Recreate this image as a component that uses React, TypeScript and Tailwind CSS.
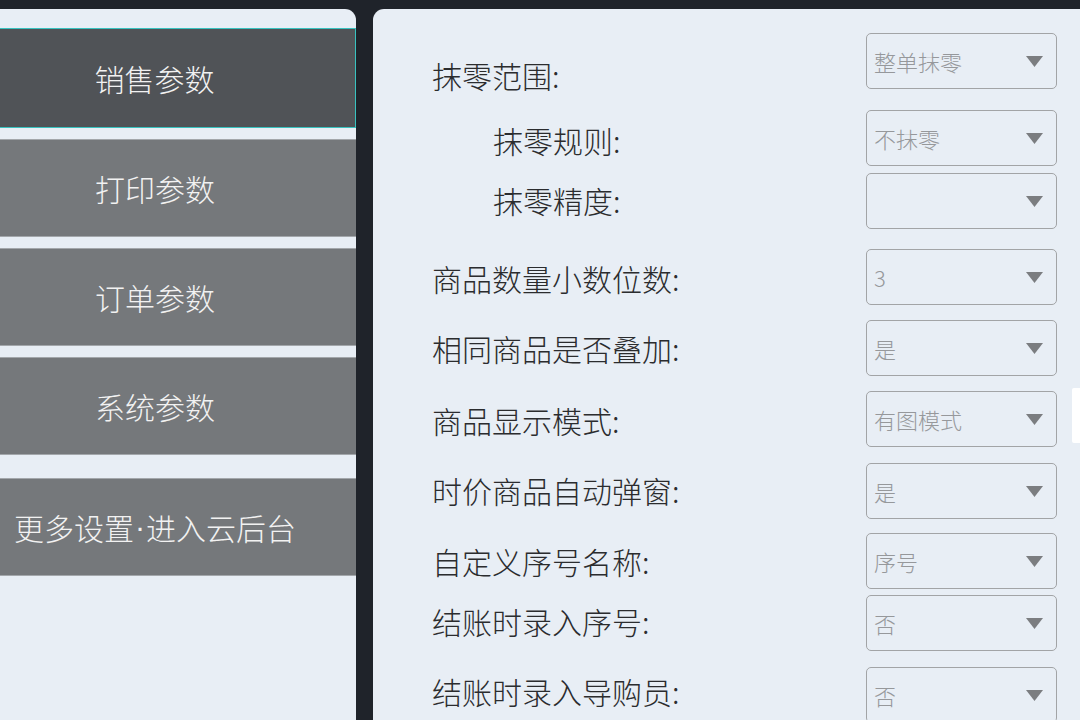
import * as React from 'react'

interface NavItem {
  id: string
  label: React.ReactNode
  active?: boolean
  gap: string
}

const NAV_ITEMS: NavItem[] = [
  { id: 'sale', label: '销售参数', active: true, gap: 'mt-[19px]' },
  { id: 'print', label: '打印参数', gap: 'mt-[11px]' },
  { id: 'order', label: '订单参数', gap: 'mt-[11px]' },
  { id: 'system', label: '系统参数', gap: 'mt-[11px]' },
  {
    id: 'more',
    label: (
      <>
        更多设置<span className="font-['Liberation_Sans',sans-serif] mx-[1px]">·</span>进入云后台
      </>
    ),
    gap: 'mt-[23px]',
  },
]

interface SettingRow {
  id: string
  label: string
  value: string
  indent?: boolean
  gap: string
  labelTop: string
}

// gap = space above the dropdown, labelTop = where the label sits inside the row
const ROWS: SettingRow[] = [
  { id: 'range', label: '抹零范围:', value: '整单抹零', gap: 'mt-[24px]', labelTop: 'pt-[27px]' },
  { id: 'rule', label: '抹零规则:', value: '不抹零', indent: true, gap: 'mt-[21px]', labelTop: 'pt-[15px]' },
  { id: 'precision', label: '抹零精度:', value: '', indent: true, gap: 'mt-[7px]', labelTop: 'pt-[12px]' },
  { id: 'decimal', label: '商品数量小数位数:', value: '3', gap: 'mt-[20px]', labelTop: 'pt-[14px]' },
  { id: 'stack', label: '相同商品是否叠加:', value: '是', gap: 'mt-[15px]', labelTop: 'pt-[13px]' },
  { id: 'display', label: '商品显示模式:', value: '有图模式', gap: 'mt-[15px]', labelTop: 'pt-[14px]' },
  { id: 'popup', label: '时价商品自动弹窗:', value: '是', gap: 'mt-[16px]', labelTop: 'pt-[12px]' },
  { id: 'seqname', label: '自定义序号名称:', value: '序号', gap: 'mt-[14px]', labelTop: 'pt-[13px]' },
  { id: 'seq', label: '结账时录入序号:', value: '否', gap: 'mt-[6px]', labelTop: 'pt-[11px]' },
  { id: 'guide', label: '结账时录入导购员:', value: '否', gap: 'mt-[16px]', labelTop: 'pt-[9px]' },
]

function Caret() {
  return (
    <svg width="17" height="11" viewBox="0 0 17 11" className="shrink-0">
      <polygon points="0,0 17,0 8.5,11" fill="#7b7d80" />
    </svg>
  )
}

export default function App() {
  return (
    <div className="w-[1080px] h-[720px] overflow-hidden bg-[#1f232a] flex flex-col font-['Noto_Sans_CJK_SC','Noto_Sans',sans-serif] font-light">
      {/* top strip */}
      <div className="h-[9px] shrink-0" />

      <div className="flex flex-1 gap-[17px] min-h-0">
        {/* Left nav */}
        <aside className="w-[356px] shrink-0 bg-[#e8eef5] rounded-tr-[11px] flex flex-col">
          {NAV_ITEMS.map((item) => (
            <button
              key={item.id}
              className={
                item.active
                  ? `${item.gap} h-[100px] w-full shrink-0 bg-[#505357] border border-[#38c2bf] border-l-0 text-[#f2f2f2] text-[30px] leading-none flex items-center justify-center pr-[46px] whitespace-nowrap`
                  : `${item.gap} h-[98px] w-full shrink-0 bg-[#75787b] border-y border-[#a3a7ab] text-[#f2f2f2] text-[30px] leading-none flex items-center justify-center pr-[46px] whitespace-nowrap`
              }
            >
              {item.label}
            </button>
          ))}
        </aside>

        {/* Right settings */}
        <main className="relative flex-1 bg-[#e8eef5] rounded-tl-[11px] flex flex-col">
          {ROWS.map((row) => (
            <div key={row.id} className={`${row.gap} h-[56px] flex items-start shrink-0`}>
              <div
                className={`${row.indent ? 'pl-[120px]' : 'pl-[59px]'} ${row.labelTop} w-[493px] shrink-0 text-[30px] leading-none text-[#2b2c2e] whitespace-nowrap`}
              >
                {row.label}
              </div>
              <div className="w-[191px] h-[56px] shrink-0 border-[1.5px] border-[#a2a4a6] rounded-[5px] flex items-center justify-between pl-[7px] pr-[13px]">
                <span className="text-[22px] leading-none text-[#96989b] whitespace-nowrap">{row.value}</span>
                <Caret />
              </div>
            </div>
          ))}

          {/* scroll thumb */}
          <div className="absolute right-0 top-[379px] w-[8px] h-[55px] bg-white rounded-l-[2px]" />
        </main>
      </div>
    </div>
  )
}
